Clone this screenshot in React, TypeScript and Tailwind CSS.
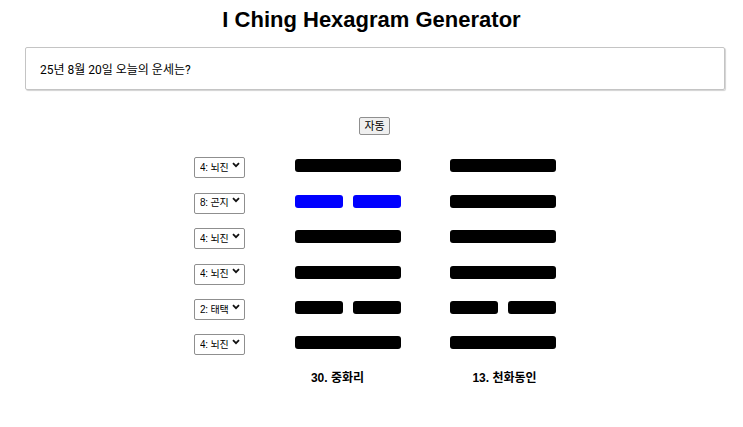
import React, { useState } from 'react';

const TRIGRAMS = [
  '1: 건천',
  '2: 태택',
  '3: 이화',
  '4: 뇌진',
  '5: 손풍',
  '6: 감수',
  '7: 간산',
  '8: 곤지',
];

type Line = { yin: boolean; moving?: boolean };

const primary: Line[] = [
  { yin: false },
  { yin: true, moving: true },
  { yin: false },
  { yin: false },
  { yin: true },
  { yin: false },
];

const changed: Line[] = [
  { yin: false },
  { yin: false },
  { yin: false },
  { yin: false },
  { yin: true },
  { yin: false },
];

const HexLine: React.FC<{ line: Line }> = ({ line }) => {
  const color = line.moving ? 'bg-[#0000ff]' : 'bg-black';

  if (!line.yin) {
    return <div className={`h-[13px] w-full rounded-[3px] ${color}`} />;
  }

  return (
    <div className="flex w-full gap-[10px]">
      <div className={`h-[13px] flex-1 rounded-[3px] ${color}`} />
      <div className={`h-[13px] flex-1 rounded-[3px] ${color}`} />
    </div>
  );
};

const TrigramSelect: React.FC<{
  value: string;
  onChange: (value: string) => void;
}> = ({ value, onChange }) => (
  <div className="relative -mt-[3px] h-[21px] w-[51px]">
    <select
      value={value}
      onChange={(e) => onChange(e.target.value)}
      className="h-full w-full appearance-none rounded-[2px] border border-[#8f8f8f] bg-white pl-[5px] text-[10px] leading-none tracking-[-0.2px]"
    >
      {TRIGRAMS.map((t) => (
        <option key={t} value={t}>
          {t}
        </option>
      ))}
    </select>
    {/* chevron */}
    <svg
      className="pointer-events-none absolute right-[5px] top-[8px]"
      width="8"
      height="6"
      viewBox="0 0 8 6"
    >
      <path d="M1 1.2 L4 4.2 L7 1.2" fill="none" stroke="#111" strokeWidth="1.8" />
    </svg>
  </div>
);

const App: React.FC = () => {
  const [question, setQuestion] = useState('25년 8월 20일 오늘의 운세는?');
  const [selected, setSelected] = useState([
    '4: 뇌진',
    '8: 곤지',
    '4: 뇌진',
    '4: 뇌진',
    '2: 태택',
    '4: 뇌진',
  ]);

  return (
    <div className="min-h-[427px] bg-white text-black font-['Liberation_Sans','Noto_Sans_CJK_KR',sans-serif]">
      <h1 className="mt-[7px] text-center text-[22px] font-bold leading-[25px]">
        I Ching Hexagram Generator
      </h1>

      <div className="ml-[25px] mt-[15px] w-[700px]">
        <input
          value={question}
          onChange={(e) => setQuestion(e.target.value)}
          className="h-[43px] w-full rounded-[2px] border border-[#c4c4c4] px-[14px] text-[12px] shadow-[1px_1px_1px_rgba(0,0,0,0.18)] outline-none font-['Roboto','Noto_Sans_CJK_KR',sans-serif]"
        />
      </div>

      <div className="mt-[27px] flex justify-center pl-[6px]">
        <button className="h-[18px] rounded-[2px] border border-[#8f8f8f] bg-[#efefef] px-[4px] text-[11px] leading-none">
          자동
        </button>
      </div>

      {/* Lines, top to bottom */}
      <div className="mt-[13.3px] flex justify-center pl-[6px]">
        <div className="flex w-[52px] flex-col">
          {selected.map((value, i) => (
            <div key={i} className="flex h-[35.4px] items-center pl-[1px]">
              <TrigramSelect
                value={value}
                onChange={(v) =>
                  setSelected((s) => s.map((old, j) => (j === i ? v : old)))
                }
              />
            </div>
          ))}
        </div>

        <div className="ml-[50px] flex w-[106px] flex-col">
          {primary.map((line, i) => (
            <div key={i} className="flex h-[35.4px] items-center">
              <HexLine line={line} />
            </div>
          ))}
        </div>

        <div className="ml-[49px] flex w-[106px] flex-col">
          {changed.map((line, i) => (
            <div key={i} className="flex h-[35.4px] items-center">
              <HexLine line={line} />
            </div>
          ))}
        </div>
      </div>

      <div className="mt-[9px] flex pl-[280px] text-[12px] font-bold leading-[16px]">
        <div className="w-[115px] text-center">30. 중화리</div>
        <div className="ml-[52px] w-[115px] text-center">13. 천화동인</div>
      </div>
    </div>
  );
};

export default App;
